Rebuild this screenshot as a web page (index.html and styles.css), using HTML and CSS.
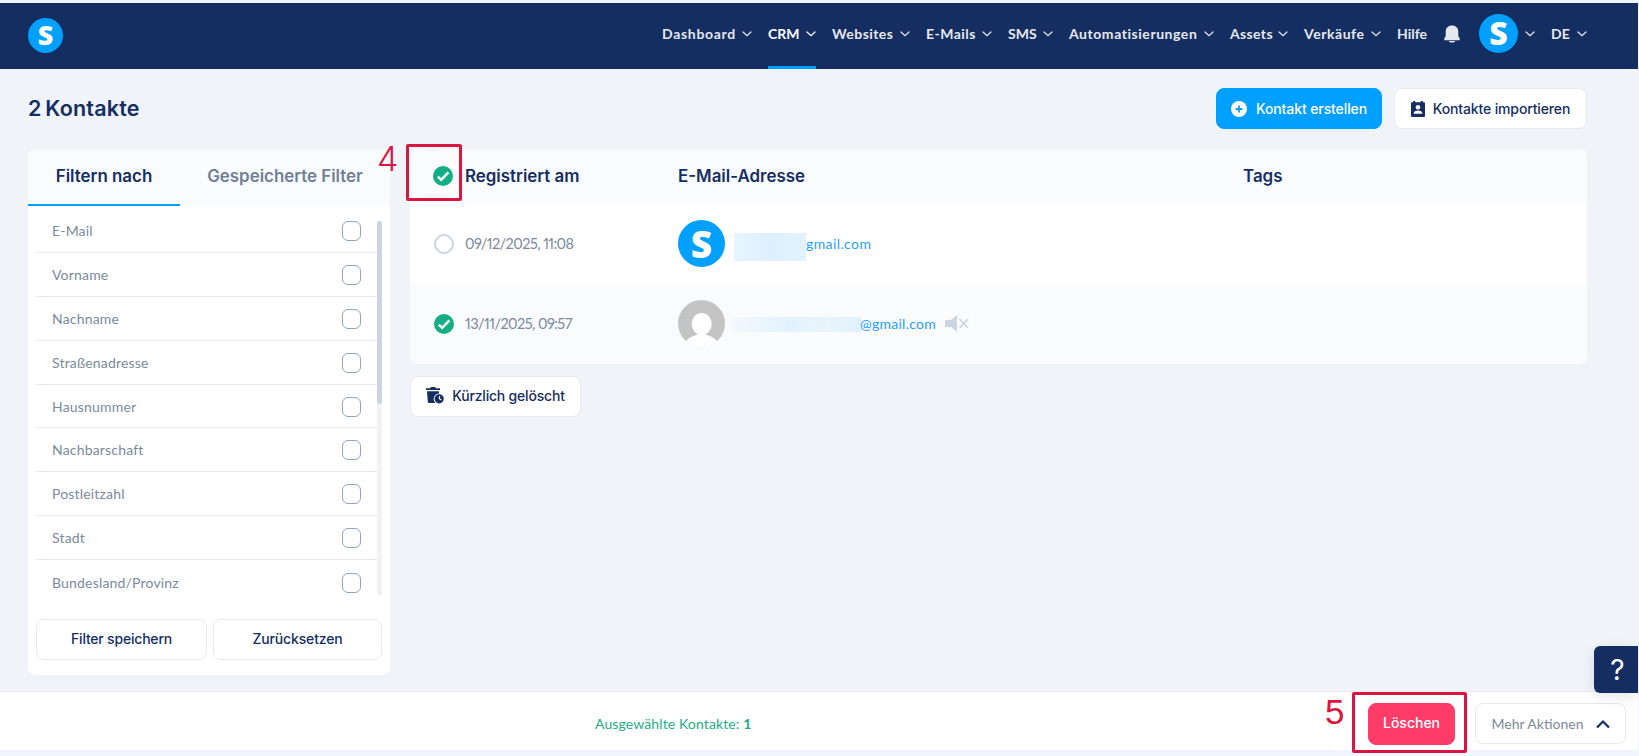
FILE: index.html
```html
<!DOCTYPE html>
<html lang="de">
<head>
<meta charset="utf-8">
<title>Kontakte</title>
<link rel="stylesheet" href="styles.css">
</head>
<body>
<svg class="defs" width="0" height="0">
  <symbol id="chev" viewBox="0 0 10 6"><path d="M1 1l4 3.700L9 1" fill="none" stroke="currentColor" stroke-width="1.200" stroke-linecap="round"/></symbol>
  <symbol id="check" viewBox="0 0 20 20"><circle cx="10" cy="10" r="10" fill="#14ae86"/><path d="M4.800 10.600l3.400 3.200 7.200-7.400" fill="none" stroke="#fff" stroke-width="2.500"/></symbol>
</svg>
<header class="topbar">
  <span class="logo logo-s">S</span>
  <nav class="nav">
    <a class="item"><span class="l1">Dashboard</span><svg class="chev"><use href="#chev"/></svg></a>
    <a class="item active"><span class="l2">CRM</span><svg class="chev"><use href="#chev"/></svg></a>
    <a class="item"><span class="l3">Websites</span><svg class="chev"><use href="#chev"/></svg></a>
    <a class="item"><span class="l4">E-Mails</span><svg class="chev"><use href="#chev"/></svg></a>
    <a class="item"><span class="l5">SMS</span><svg class="chev"><use href="#chev"/></svg></a>
    <a class="item"><span class="l6">Automatisierungen</span><svg class="chev"><use href="#chev"/></svg></a>
    <a class="item"><span class="l7">Assets</span><svg class="chev"><use href="#chev"/></svg></a>
    <a class="item"><span class="l8">Verkäufe</span><svg class="chev"><use href="#chev"/></svg></a>
    <a class="item"><span class="l9">Hilfe</span></a>
    <a class="item"><svg class="bell" viewBox="0 0 16 18"><path d="M8 .5C4.200.5 1.700 3 1.700 6.500V11L.4 13.300c-.6 1.100-.2 1.900.9 1.900h13.400c1.100 0 1.500-.8.900-1.900L14.300 11V6.500C14.300 3 11.800.5 8 .5zM4.800 16h6.400c-.3 1-1.600 1.500-3.200 1.500S5.100 17 4.800 16z" fill="currentColor"/></svg></a>
    <a class="item"><span class="logo logo-m">S</span><svg class="chev"><use href="#chev"/></svg></a>
    <a class="item last"><span>DE</span><svg class="chev"><use href="#chev"/></svg></a>
  </nav>
</header>
<main class="page">
  <div class="head">
    <h1 class="title">2 Kontakte</h1>
    <button class="btn primary"><svg width="16" height="16" viewBox="0 0 16 16"><circle cx="8" cy="8" r="8" fill="#fff"/><path d="M8 4.600v6.800M4.600 8h6.800" stroke="#00a0ff" stroke-width="1.800"/></svg><span class="t-create">Kontakt erstellen</span></button>
    <button class="btn import"><svg width="14" height="16" viewBox="0 0 14 16"><path d="M1 1.200h1.200V0h2v1.200h5.600V0h2v1.200H13a1 1 0 0 1 1 1V15a1 1 0 0 1-1 1H1a1 1 0 0 1-1-1V2.200a1 1 0 0 1 1-1z" fill="#152e62"/><circle cx="7" cy="6.300" r="2.300" fill="#fff"/><path d="M2.700 12.700v-.8c0-1.500 2-2.400 4.300-2.400s4.300.9 4.300 2.400v.8z" fill="#fff"/></svg><span class="t-import">Kontakte importieren</span></button>
  </div>
  <div class="columns">
    <aside class="filters">
      <div class="tabs"><span class="tab on"><span>Filtern nach</span></span><span class="tab"><span class="t-saved">Gespeicherte Filter</span></span></div>
      <div class="scroll">
        <div class="list">
          <label class="row"><span>E-Mail</span><i class="box"></i></label>
          <label class="row"><span>Vorname</span><i class="box"></i></label>
          <label class="row"><span>Nachname</span><i class="box"></i></label>
          <label class="row"><span>Straßenadresse</span><i class="box"></i></label>
          <label class="row"><span>Hausnummer</span><i class="box"></i></label>
          <label class="row"><span>Nachbarschaft</span><i class="box"></i></label>
          <label class="row"><span>Postleitzahl</span><i class="box"></i></label>
          <label class="row"><span>Stadt</span><i class="box"></i></label>
          <label class="row"><span>Bundesland/Provinz</span><i class="box"></i></label>
        </div>
        <div class="track"><div class="thumb"></div></div>
      </div>
      <div class="actions"><button class="btn light save"><span>Filter speichern</span></button><button class="btn light reset"><span>Zurücksetzen</span></button></div>
    </aside>
    <section class="content">
      <div class="table">
        <div class="tr th"><svg class="check"><use href="#check"/></svg><span class="t-reg">Registriert am</span><span class="t-mail">E-Mail-Adresse</span><span class="t-tags">Tags</span></div>
        <div class="tr"><i class="radio"></i><span class="date">09/12/2025, 11:08</span><div class="mail"><span class="logo logo-l">S</span><i class="mask mask-a"></i><span class="addr">gmail.com</span></div></div>
        <div class="tr alt"><svg class="check"><use href="#check"/></svg><span class="date">13/11/2025, 09:57</span><div class="mail"><svg class="person" viewBox="0 0 47 47"><circle cx="23.500" cy="23.500" r="23.500" fill="#c4c4c4"/><ellipse cx="23.700" cy="24" rx="10" ry="11" fill="#fff"/><path d="M19 31v4c-3 .4-8 2.500-11 6 8.500 8 22.500 8 31 0-3-3.500-8-5.600-11-6v-4z" fill="#fff"/></svg><i class="mask mask-b"></i><span class="addr addr-b">@gmail.com</span><svg class="mute" viewBox="0 0 24 18"><path d="M0 5h6l6-5v17l-6-5H0z" fill="#cbd5e1"/><path d="M14.500 4l8.500 9M23 4l-8.500 9" stroke="#cbd5e1" stroke-width="1.700" fill="none"/></svg></div></div>
      </div>
      <button class="btn recent"><svg width="18" height="17" viewBox="0 0 18 17"><path d="M0 1.200h4L5 0h4l1 1.200h4v1.900H0zM1 4.200h12v2.300a5.500 5.500 0 0 0-3.500 9.500H3a1.200 1.200 0 0 1-1.200-1z" fill="#152e62"/><path fill-rule="evenodd" d="M13.200 7.200a4.600 4.600 0 1 1 0 9.200 4.600 4.600 0 0 1 0-9.200zM12.900 9.200v2.900l2.300 1.500.6-.9-1.700-1.100V9.200z" fill="#152e62"/></svg><span>Kürzlich gelöscht</span></button>
    </section>
  </div>
</main>
<footer class="bottom">
  <span class="count">Ausgewählte Kontakte: <b>1</b></span>
  <button class="btn delete"><span>Löschen</span></button>
  <button class="btn more"><span>Mehr Aktionen</span><svg width="14" height="10" viewBox="0 0 14 10"><path d="M1 8.500l6-6 6 6" fill="none" stroke="#152e62" stroke-width="2.200"/></svg></button>
</footer>
<div class="help">?</div>
<div class="mark mark-4"></div><span class="num num-4">4</span>
<div class="mark mark-5"></div><span class="num num-5">5</span>
</body>
</html>
```
FILE: styles.css
```css
* { box-sizing: border-box; }
body { margin: 0; width: 1639px; height: 756px; overflow: hidden; background: #eff6ff; font-family: Lato, sans-serif; display: flex; flex-direction: column; padding-top: 3px; position: relative; color: #152e62; }
.defs { position: absolute; }
span { white-space: nowrap; }
.topbar { width: 1638px; height: 66px; flex: none; background: #152e62; display: flex; justify-content: space-between; align-items: center; padding: 0 51px 2px 28px; }
.logo { display: flex; align-items: center; justify-content: center; border-radius: 50%; background: #00a0ff; color: #fff; font-family: "Open Sans", sans-serif; font-weight: 800; line-height: 1; flex: none; }
.logo-s { width: 35px; height: 35px; font-size: 27px; padding-bottom: 2px; }
.logo-m { width: 39px; height: 39px; font-size: 32px; padding-bottom: 2px; }
.logo-l { width: 47px; height: 47px; font-size: 37px; padding-bottom: 1px; }
.nav { display: grid; grid-template-columns: 106px 64px 94px 82px 61px 161px 74px 93px 47px 35px 72px 36px; height: 66px; margin-bottom: -2px; color: #e5e9ee; font-size: 14px; font-weight: 700; }
.item { display: flex; align-items: center; justify-content: space-between; margin-right: 16px; padding-bottom: 5px; border-bottom: 0 solid #00a0ff; }
.item.active { color: #fff; border-bottom-width: 3px; padding-bottom: 2px; }
.item.last { margin-right: 0; }
.l1 { letter-spacing: .7px; }
.l3 { letter-spacing: .45px; }
.l4 { letter-spacing: .45px; }
.l6 { letter-spacing: .55px; }
.l7 { letter-spacing: .35px; }
.l8 { letter-spacing: .55px; }
.chev { width: 10px; height: 6px; flex: none; }
.bell { width: 16px; height: 18px; flex: none; }
.page { width: 1639px; height: 622px; flex: none; background: #f0f4f9; padding: 19px 52px 0 28px; }
.head { display: flex; height: 41px; align-items: center; }
.title { font: 600 21.5px/24px Inter, sans-serif; letter-spacing: .2px; word-spacing: -2px; margin: 0 auto 0 0; padding-bottom: 2px; }
.btn { display: flex; align-items: center; justify-content: center; font: 500 14px/20px Inter, sans-serif; letter-spacing: -.14px; color: #152e62; border: 1px solid #e6eaef; border-radius: 8px; background: #fff; padding: 0; flex: none; height: 41px; }
.primary { width: 166px; background: #00a0ff; border-color: #00a0ff; color: #fff; gap: 9px; margin-right: 12px; letter-spacing: -.1px; }
.import { width: 193px; gap: 8px; }
.columns { display: flex; margin-top: 20px; gap: 20px; }
.filters { width: 362px; height: 526px; background: #fff; border-radius: 8px; overflow: hidden; }
.tabs { height: 57px; background: #fafbfd; display: flex; font: 600 16.9px/20px Inter, sans-serif; }
.tab { display: flex; align-items: center; justify-content: center; width: 210px; color: #718096; padding-bottom: 3px; }
.tab.on { width: 152px; color: #152e62; border-bottom: 2px solid #00a0ff; padding-bottom: 1px; }
.scroll { height: 398px; display: flex; padding: 3px 8px 0; }
.list { width: 341px; }
.row { display: flex; align-items: center; justify-content: space-between; height: 43.9px; padding: 1px 16px 0; border-bottom: 1px solid #e6eaee; font-size: 14px; letter-spacing: .18px; color: #7b8a9d; }
.row span { padding-bottom: 1px; }
.row:last-child { border: 0; }
.box { width: 19px; height: 20px; border: 1px solid #94a3b8; border-radius: 6px; }
.track { width: 5px; height: 375px; margin-top: 12px; background: #f2f2f2; border-radius: 3px; }
.thumb { height: 183px; background: #cbd5e1; border-radius: 3px; }
.actions { display: flex; gap: 6px; padding: 15px 8px 0; }
.save { width: 171px; letter-spacing: -.2px; padding-bottom: 2px; }
.reset { width: 169px; padding-bottom: 2px; }
.content { width: 1177px; }
.table { border-radius: 8px; overflow: hidden; background: #fff; }
.tr { display: grid; grid-template-columns: 31px 213px 566px 1fr; height: 80px; align-items: center; padding-left: 24px; font-size: 14px; color: #7b8a9d; }
.tr.th { height: 55px; background: #fafbfd; font: 600 16.9px/20px Inter, sans-serif; color: #152e62; padding: 0 0 1px 23px; grid-template-columns: 32px 213px 565px 1fr; }
.tr.alt { background: #fafbfd; }
.date { font-size: 14.5px; letter-spacing: -.5px; padding-bottom: 1px; font-feature-settings: "pnum"; letter-spacing: -.55px; }
.check { width: 20px; height: 20px; }
.radio { width: 20px; height: 20px; border: 2px solid #cbd5e1; border-radius: 50%; }
.mail { display: flex; align-items: center; color: #25a0fb; margin-left: -1px; padding: 0 0 1px 1px; }
.addr { letter-spacing: .4px; padding-bottom: 1px; }
.addr-b { letter-spacing: .25px; margin-left: -1px; }
.person { width: 47px; height: 47px; flex: none; }
.mask { flex: none; }
.mask-a { width: 72px; height: 28px; margin: 7px 0 0 9px; background: linear-gradient(90deg, #e8f5ff, #deefff 50%, #e2f3ff); }
.mask-b { width: 130px; height: 15px; margin: 1px 0 0 6px; background: linear-gradient(90deg, #f3f9fd, #e2f2fc 45%, #e9f4fb 75%, #e0f1fc); }
.mute { width: 24px; height: 18px; margin-left: 9px; }
.recent { width: 171px; margin-top: 12px; gap: 8px; letter-spacing: -.2px; padding-bottom: 2px; }
.bottom { width: 1638px; height: 59px; flex: none; background: #fff; border-top: 1px solid #e8ebef; display: flex; padding: 11px 12px 0 595px; }
.count { color: #23ae86; font-size: 14px; line-height: 20px; letter-spacing: .12px; margin: 11px auto 0 0; }
.delete { width: 87px; height: 42px; background: #ff3b67; border-color: #ff3b67; color: #fff; margin-right: 20px; letter-spacing: 0; padding-bottom: 2px; }
.more { width: 151px; gap: 12px; font: 14px/20px Lato, sans-serif; color: #7b8a9d; letter-spacing: 0; }
.help { position: absolute; left: 1594px; top: 646px; width: 44px; height: 47px; background: #152e62; color: #fff; border-radius: 6px 0 0 6px; font: 400 28px/48px Inter, sans-serif; text-align: center; padding-left: 3px; box-shadow: 0 4px 14px rgba(0, 0, 0, .1); }
.mark { position: absolute; border: 3px solid #d9163f; border-radius: 2px; }
.mark-4 { left: 406px; top: 144px; width: 56px; height: 57px; }
.mark-5 { left: 1352px; top: 692px; width: 115px; height: 61px; }
.num { position: absolute; font: 300 34px/34px Inter, sans-serif; color: #d9163f; }
.num-4 { left: 377px; top: 142px; }
.num-5 { left: 1325px; top: 695px; font: 35px/34px "Liberation Sans", sans-serif; }
```
